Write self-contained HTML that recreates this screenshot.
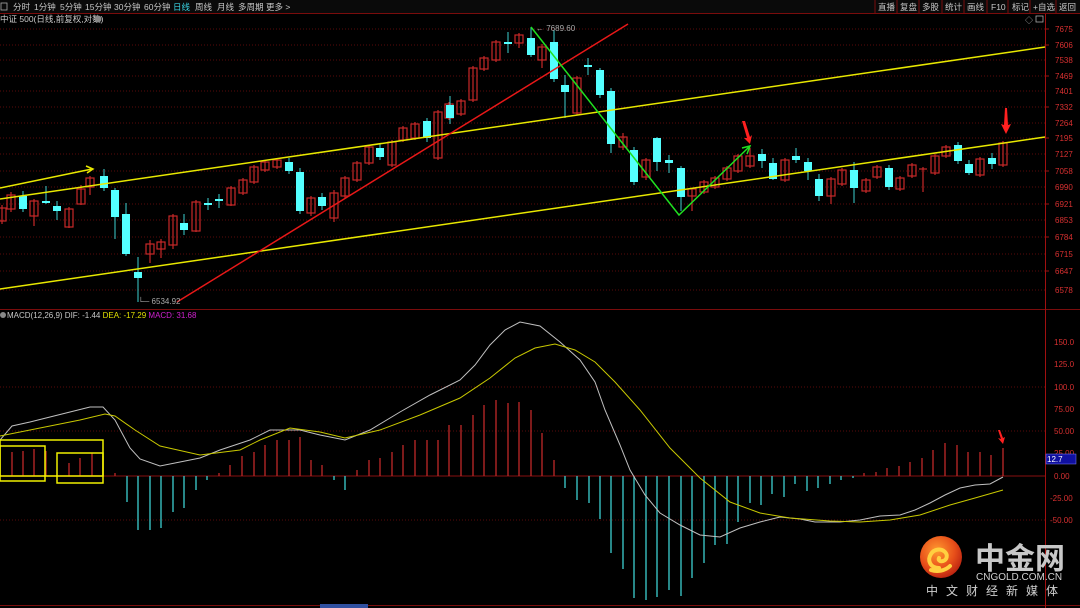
<!DOCTYPE html>
<html><head><meta charset="utf-8"><style>
body{margin:0;background:#000;width:1080px;height:608px;overflow:hidden;font-family:"Liberation Sans","Noto Sans CJK SC",sans-serif}
svg{position:absolute;left:0;top:0}
</style></head><body>
<svg width="1080" height="608" viewBox="0 0 1080 608" font-family="Liberation Sans, Noto Sans CJK SC, sans-serif">
<rect width="1080" height="608" fill="#000"/>
<!-- toolbar -->
<rect x="0" y="0" width="1080" height="13" fill="#0a0a0a"/>
<line x1="0" y1="13.5" x2="1080" y2="13.5" stroke="#7a0c0c"/>
<g font-size="8.5" fill="#c8c8c8">
<rect x="1" y="3" width="6" height="7" fill="none" stroke="#aaa" stroke-width="0.8"/>
<text x="13" y="10">分时</text><text x="34" y="10">1分钟</text><text x="60" y="10">5分钟</text><text x="85" y="10">15分钟</text><text x="114" y="10">30分钟</text><text x="144" y="10">60分钟</text><text x="173" y="10" fill="#3ad6e6">日线</text><text x="195" y="10">周线</text><text x="217" y="10">月线</text><text x="238" y="10">多周期</text><text x="266" y="10">更多 &gt;</text>
<text x="878" y="10">直播</text><text x="900" y="10">复盘</text><text x="922" y="10">多股</text><text x="945" y="10">统计</text><text x="967" y="10">画线</text><text x="991" y="10">F10</text><text x="1012" y="10">标记</text><text x="1033" y="10">+自选</text><text x="1059" y="10">返回</text>
</g>
<g stroke="#7a0c0c"><line x1="875" y1="0" x2="875" y2="13"/><line x1="897" y1="0" x2="897" y2="13"/><line x1="919" y1="0" x2="919" y2="13"/><line x1="942" y1="0" x2="942" y2="13"/><line x1="964" y1="0" x2="964" y2="13"/><line x1="987" y1="0" x2="987" y2="13"/><line x1="1008" y1="0" x2="1008" y2="13"/><line x1="1030" y1="0" x2="1030" y2="13"/><line x1="1056" y1="0" x2="1056" y2="13"/></g>
<text x="0" y="22" font-size="8.5" fill="#c8c8c8">中证 500(日线,前复权,对数)</text>
<circle cx="98" cy="19" r="3.5" fill="#888"/>
<text x="1025" y="23" font-size="8" fill="#aaa">◇</text><rect x="1036" y="16" width="7" height="6" fill="none" stroke="#aaa" stroke-width="0.8"/>
<!-- grid main -->
<g stroke="#5a0a0a" stroke-dasharray="1,2" stroke-width="1">
<line x1="0" y1="29" x2="1045" y2="29"/><line x1="0" y1="45" x2="1045" y2="45"/><line x1="0" y1="60" x2="1045" y2="60"/><line x1="0" y1="76" x2="1045" y2="76"/><line x1="0" y1="91" x2="1045" y2="91"/><line x1="0" y1="107" x2="1045" y2="107"/><line x1="0" y1="123" x2="1045" y2="123"/><line x1="0" y1="138" x2="1045" y2="138"/><line x1="0" y1="154" x2="1045" y2="154"/><line x1="0" y1="171" x2="1045" y2="171"/><line x1="0" y1="187" x2="1045" y2="187"/><line x1="0" y1="204" x2="1045" y2="204"/><line x1="0" y1="220" x2="1045" y2="220"/><line x1="0" y1="237" x2="1045" y2="237"/><line x1="0" y1="254" x2="1045" y2="254"/><line x1="0" y1="271" x2="1045" y2="271"/><line x1="0" y1="290" x2="1045" y2="290"/>
<line x1="0" y1="387" x2="1045" y2="387"/><line x1="0" y1="431" x2="1045" y2="431"/><line x1="0" y1="520" x2="1045" y2="520"/>
</g>
<line x1="0" y1="476" x2="1045" y2="476" stroke="#5a0a0a" stroke-width="1.5"/>
<line x1="0" y1="309.5" x2="1080" y2="309.5" stroke="#7a0c0c"/>
<line x1="0" y1="605.5" x2="1080" y2="605.5" stroke="#7a0c0c"/>
<line x1="1045.5" y1="14" x2="1045.5" y2="608" stroke="#a01010"/>
<g font-size="8" fill="#d83030">
<text x="1055" y="32">7675</text><text x="1055" y="48">7606</text><text x="1055" y="63">7538</text><text x="1055" y="79">7469</text><text x="1055" y="94">7401</text><text x="1055" y="110">7332</text><text x="1055" y="126">7264</text><text x="1055" y="141">7195</text><text x="1055" y="157">7127</text><text x="1055" y="174">7058</text><text x="1055" y="190">6990</text><text x="1055" y="207">6921</text><text x="1055" y="223">6853</text><text x="1055" y="240">6784</text><text x="1055" y="257">6715</text><text x="1055" y="274">6647</text><text x="1055" y="293">6578</text>
<text x="1054" y="345">150.0</text><text x="1054" y="367">125.0</text><text x="1054" y="390">100.0</text><text x="1054" y="412">75.00</text><text x="1054" y="434">50.00</text><text x="1054" y="456">25.00</text><text x="1054" y="479">0.00</text><text x="1050" y="501">-25.00</text><text x="1050" y="523">-50.00</text>
</g>
<g stroke="#a01010"><line x1="1045" y1="29" x2="1049" y2="29"/><line x1="1045" y1="45" x2="1049" y2="45"/><line x1="1045" y1="76" x2="1049" y2="76"/><line x1="1045" y1="107" x2="1049" y2="107"/><line x1="1045" y1="138" x2="1049" y2="138"/><line x1="1045" y1="171" x2="1049" y2="171"/><line x1="1045" y1="204" x2="1049" y2="204"/><line x1="1045" y1="237" x2="1049" y2="237"/><line x1="1045" y1="271" x2="1049" y2="271"/></g>
<rect x="1046" y="454" width="30" height="10" fill="#1010a0" stroke="#8080ff" stroke-width="0.5"/><text x="1047" y="462" font-size="8" fill="#fff">12.7</text>

<!-- candles: red hollow -->
<g stroke="#c82828" fill="none" stroke-width="1.2">
<path d="M2 205V224M11 192V212M34 199V226M69 207V228M81 185V205M90 176V195M150 240V263M161 239V258M173 214V249M196 200V232M231 186V206M243 178V195M254 165V184M265 160V172M277 158V169M311 196V216M334 190V222M345 176V198M357 161V182M369 145V165M392 140V167M403 126V142M415 122V140M438 110V160M449 102V120M461 99V116M473 66V102M484 56V71M496 40V62M519 33V48M542 44V68M577 76V115M623 133V150M646 158V180M692 188V211M704 180V194M715 176V189M727 166V181M738 154V173M750 148V168M785 158V182M831 177V204M842 168V186M866 178V193M877 165V179M900 176V191M912 163V178M923 167V192M935 154V175M946 145V158M980 157V177M1003 141V167"/>
<rect x="-2" y="208" width="8" height="13"/><rect x="7" y="195" width="8" height="14"/><rect x="30" y="201" width="8" height="15"/><rect x="65" y="209" width="8" height="18"/><rect x="77" y="189" width="8" height="15"/><rect x="86" y="178" width="8" height="9"/><rect x="146" y="244" width="8" height="10"/><rect x="157" y="242" width="8" height="7"/><rect x="169" y="216" width="8" height="29"/><rect x="192" y="202" width="8" height="29"/><rect x="227" y="188" width="8" height="17"/><rect x="239" y="180" width="8" height="13"/><rect x="250" y="167" width="8" height="15"/><rect x="261" y="162" width="8" height="8"/><rect x="273" y="160" width="8" height="7"/><rect x="307" y="198" width="8" height="15"/><rect x="330" y="193" width="8" height="25"/><rect x="341" y="178" width="8" height="18"/><rect x="353" y="163" width="8" height="17"/><rect x="365" y="147" width="8" height="16"/><rect x="388" y="142" width="8" height="23"/><rect x="399" y="128" width="8" height="12"/><rect x="411" y="124" width="8" height="14"/><rect x="434" y="112" width="8" height="46"/><rect x="445" y="104" width="8" height="14"/><rect x="457" y="101" width="8" height="13"/><rect x="469" y="68" width="8" height="32"/><rect x="480" y="58" width="8" height="11"/><rect x="492" y="42" width="8" height="18"/><rect x="515" y="35" width="8" height="8"/><rect x="538" y="47" width="8" height="13"/><rect x="573" y="78" width="8" height="35"/><rect x="619" y="137" width="8" height="10"/><rect x="642" y="160" width="8" height="17"/><rect x="688" y="189" width="8" height="7"/><rect x="700" y="182" width="8" height="10"/><rect x="711" y="178" width="8" height="9"/><rect x="723" y="168" width="8" height="11"/><rect x="734" y="156" width="8" height="15"/><rect x="746" y="156" width="8" height="10"/><rect x="781" y="160" width="8" height="20"/><rect x="827" y="179" width="8" height="17"/><rect x="838" y="170" width="8" height="14"/><rect x="862" y="180" width="8" height="11"/><rect x="873" y="167" width="8" height="10"/><rect x="896" y="178" width="8" height="11"/><rect x="908" y="165" width="8" height="11"/><line x1="919" y1="169" x2="927" y2="169"/><rect x="931" y="156" width="8" height="17"/><rect x="942" y="147" width="8" height="9"/><rect x="976" y="159" width="8" height="16"/><rect x="999" y="143" width="8" height="22"/>
</g>
<!-- cyan -->
<g stroke="#3ccfd0" stroke-width="1" fill="none">
<path d="M23 191V212M46 186V204M57 201V220M104 169V191M115 188V239M126 203V256M138 257V302M184 214V235M208 198V210M219 194V208M289 158V174M300 168V214M322 193V210M380 144V160M427 118V142M450 96V124M508 32V53M531 27V57M554 30V82M565 75V118M588 58V75M600 68V98M611 88V153M634 147V185M657 137V171M669 155V173M681 166V211M762 149V168M773 158V180M796 148V163M808 158V180M819 174V201M854 162V203M889 165V190M958 142V164M969 160V175M992 153V169"/>
</g>
<g fill="#54ffff">
<rect x="19" y="196" width="8" height="13"/><rect x="42" y="201" width="8" height="2"/><rect x="53" y="206" width="8" height="5"/><rect x="100" y="176" width="8" height="12"/><rect x="111" y="190" width="8" height="27"/><rect x="122" y="214" width="8" height="40"/><rect x="134" y="272" width="8" height="6"/><rect x="180" y="223" width="8" height="7"/><rect x="204" y="203" width="8" height="2"/><rect x="215" y="199" width="8" height="2"/><rect x="285" y="162" width="8" height="9"/><rect x="296" y="172" width="8" height="39"/><rect x="318" y="197" width="8" height="9"/><rect x="376" y="148" width="8" height="9"/><rect x="423" y="121" width="8" height="17"/><rect x="446" y="105" width="8" height="13"/><rect x="504" y="42" width="8" height="2"/><rect x="527" y="38" width="8" height="17"/><rect x="550" y="42" width="8" height="37"/><rect x="561" y="85" width="8" height="7"/><rect x="584" y="65" width="8" height="2"/><rect x="596" y="70" width="8" height="25"/><rect x="607" y="91" width="8" height="53"/><rect x="630" y="150" width="8" height="32"/><rect x="653" y="138" width="8" height="24"/><rect x="665" y="160" width="8" height="3"/><rect x="677" y="168" width="8" height="29"/><rect x="758" y="154" width="8" height="7"/><rect x="769" y="163" width="8" height="16"/><rect x="792" y="156" width="8" height="4"/><rect x="804" y="162" width="8" height="9"/><rect x="815" y="179" width="8" height="17"/><rect x="850" y="170" width="8" height="18"/><rect x="885" y="168" width="8" height="19"/><rect x="954" y="145" width="8" height="16"/><rect x="965" y="164" width="8" height="9"/><rect x="988" y="158" width="8" height="6"/>
</g>
<!-- drawn lines -->
<g stroke-width="1.5" fill="none">
<line x1="0" y1="199" x2="1045" y2="47" stroke="#e8e800"/>
<line x1="0" y1="289" x2="1045" y2="137" stroke="#e8e800"/>
<line x1="0" y1="188" x2="92" y2="169" stroke="#e8e800"/>
<path d="M86 166L93 169L87 173" stroke="#e8e800"/>
<line x1="177" y1="302" x2="628" y2="24" stroke="#e81818"/>
<path d="M531 27L679 215L749 147" stroke="#20e020"/>
<path d="M742 148L750 146L747 154" stroke="#20e020"/>
</g>
<path d="M742 121L745 121L750 137L752 135L750 144L744 138L747 138Z" fill="#ff2020"/>
<path d="M1005 108L1007 108L1008 125L1011 124L1006 134L1001 124L1004 125Z" fill="#ff2020"/>
<text x="536" y="31" font-size="8" fill="#aaa">← 7689.60</text>
<text x="138" y="304" font-size="8" fill="#aaa">└─ 6534.92</text>
<!-- MACD header -->
<circle cx="3" cy="315" r="3" fill="#888"/>
<text x="7" y="318" font-size="8" fill="#c8c8c8">MACD(12,26,9)  DIF: -1.44  <tspan fill="#e0e000">DEA: -17.29</tspan>  <tspan fill="#d020d0">MACD: 31.68</tspan></text>
<!-- MACD bars -->
<g stroke="#c02828" stroke-width="1.3">
<path d="M12 476V452M23 476V451M34 476V449M46 476V451M69 476V463M80 476V458M92 476V453M103 476V456M115 476V473M219 476V473M230 476V465M242 476V456M254 476V452M265 476V445M277 476V440M289 476V440M300 476V437M311 476V460M322 476V465M357 476V470M369 476V460M380 476V458M392 476V452M403 476V445M415 476V440M427 476V440M438 476V440M449 476V425M461 476V425M473 476V415M484 476V405M496 476V400M508 476V403M519 476V402M531 476V410M542 476V433M554 476V460M864 476V473M876 476V472M887 476V468M899 476V466M910 476V462M922 476V458M933 476V450M945 476V443M957 476V445M968 476V452M980 476V452M991 476V455M1003 476V448"/>
</g>
<g stroke="#3ccfd0" stroke-width="1.3">
<path d="M127 476V502M138 476V530M150 476V530M161 476V528M173 476V512M184 476V508M196 476V490M207 476V480M334 476V480M345 476V490M565 476V488M577 476V500M589 476V503M600 476V519M611 476V553M623 476V569M634 476V598M646 476V600M657 476V597M669 476V590M681 476V596M692 476V578M704 476V563M715 476V545M727 476V544M738 476V522M750 476V503M761 476V505M772 476V494M784 476V497M795 476V484M807 476V491M818 476V488M830 476V484M841 476V480M853 476V478"/>
</g>
<polyline fill="none" stroke="#c0c0c0" stroke-width="1" points="0,440 12,426 30,422 50,417 70,412 90,407 103,407 115,420 130,448 140,459 160,466 180,462 200,458 220,450 250,440 270,430 300,430 320,435 345,440 370,430 400,412 430,395 460,380 475,365 490,345 505,330 520,322 540,326 560,342 580,360 595,382 605,410 620,445 630,470 645,495 660,513 680,525 700,535 720,537 740,528 760,522 780,517 800,519 815,522 840,522 860,520 880,516 900,515 915,510 930,503 945,495 960,488 975,485 990,484 1003,477"/>
<polyline fill="none" stroke="#c8c800" stroke-width="1" points="0,436 40,428 80,420 105,414 115,416 135,430 160,446 200,455 240,450 260,440 290,428 320,432 345,438 380,430 420,415 460,398 490,378 515,358 535,348 555,344 575,350 595,362 615,382 640,410 670,448 700,478 730,502 760,513 790,518 830,521 860,522 890,520 920,515 950,505 975,498 1003,490"/>
<!-- yellow boxes -->
<g fill="none" stroke="#f0f000" stroke-width="1.5">
<rect x="0" y="446" width="45" height="35"/><rect x="0" y="440" width="103" height="36"/><rect x="57" y="453" width="46" height="30"/>
</g>
<path d="M998 430L1000 430L1003 438L1005 437L1003 444L998 438L1001 439Z" fill="#ff2020"/>
<!-- logo -->
<defs><radialGradient id="g" cx="40%" cy="35%" r="70%"><stop offset="0" stop-color="#ff9a30"/><stop offset="0.6" stop-color="#e8501a"/><stop offset="1" stop-color="#b82010"/></radialGradient></defs>
<circle cx="941" cy="557" r="21" fill="url(#g)"/>
<path d="M939 568c-9 0-12-8-8-14 3-5 10-6 14-2 3 3 2 8-2 9-3 1-5-1-4-3M931 570c6 2 14 1 19-4" fill="none" stroke="#ffd040" stroke-width="4" stroke-linecap="round"/>
<text x="975" y="569" font-size="30" font-weight="bold" fill="#c8c8c8" font-family="Noto Sans CJK SC, sans-serif">中金网</text>
<text x="976" y="580" font-size="10" fill="#d0d0d0">CNGOLD.COM.CN</text>
<text x="926" y="595" font-size="12" fill="#d0d0d0" letter-spacing="8" font-family="Noto Sans CJK SC, sans-serif">中文财经新媒体</text>
<rect x="320" y="604" width="48" height="4" fill="#3050a0"/>
</svg>
</body></html>
